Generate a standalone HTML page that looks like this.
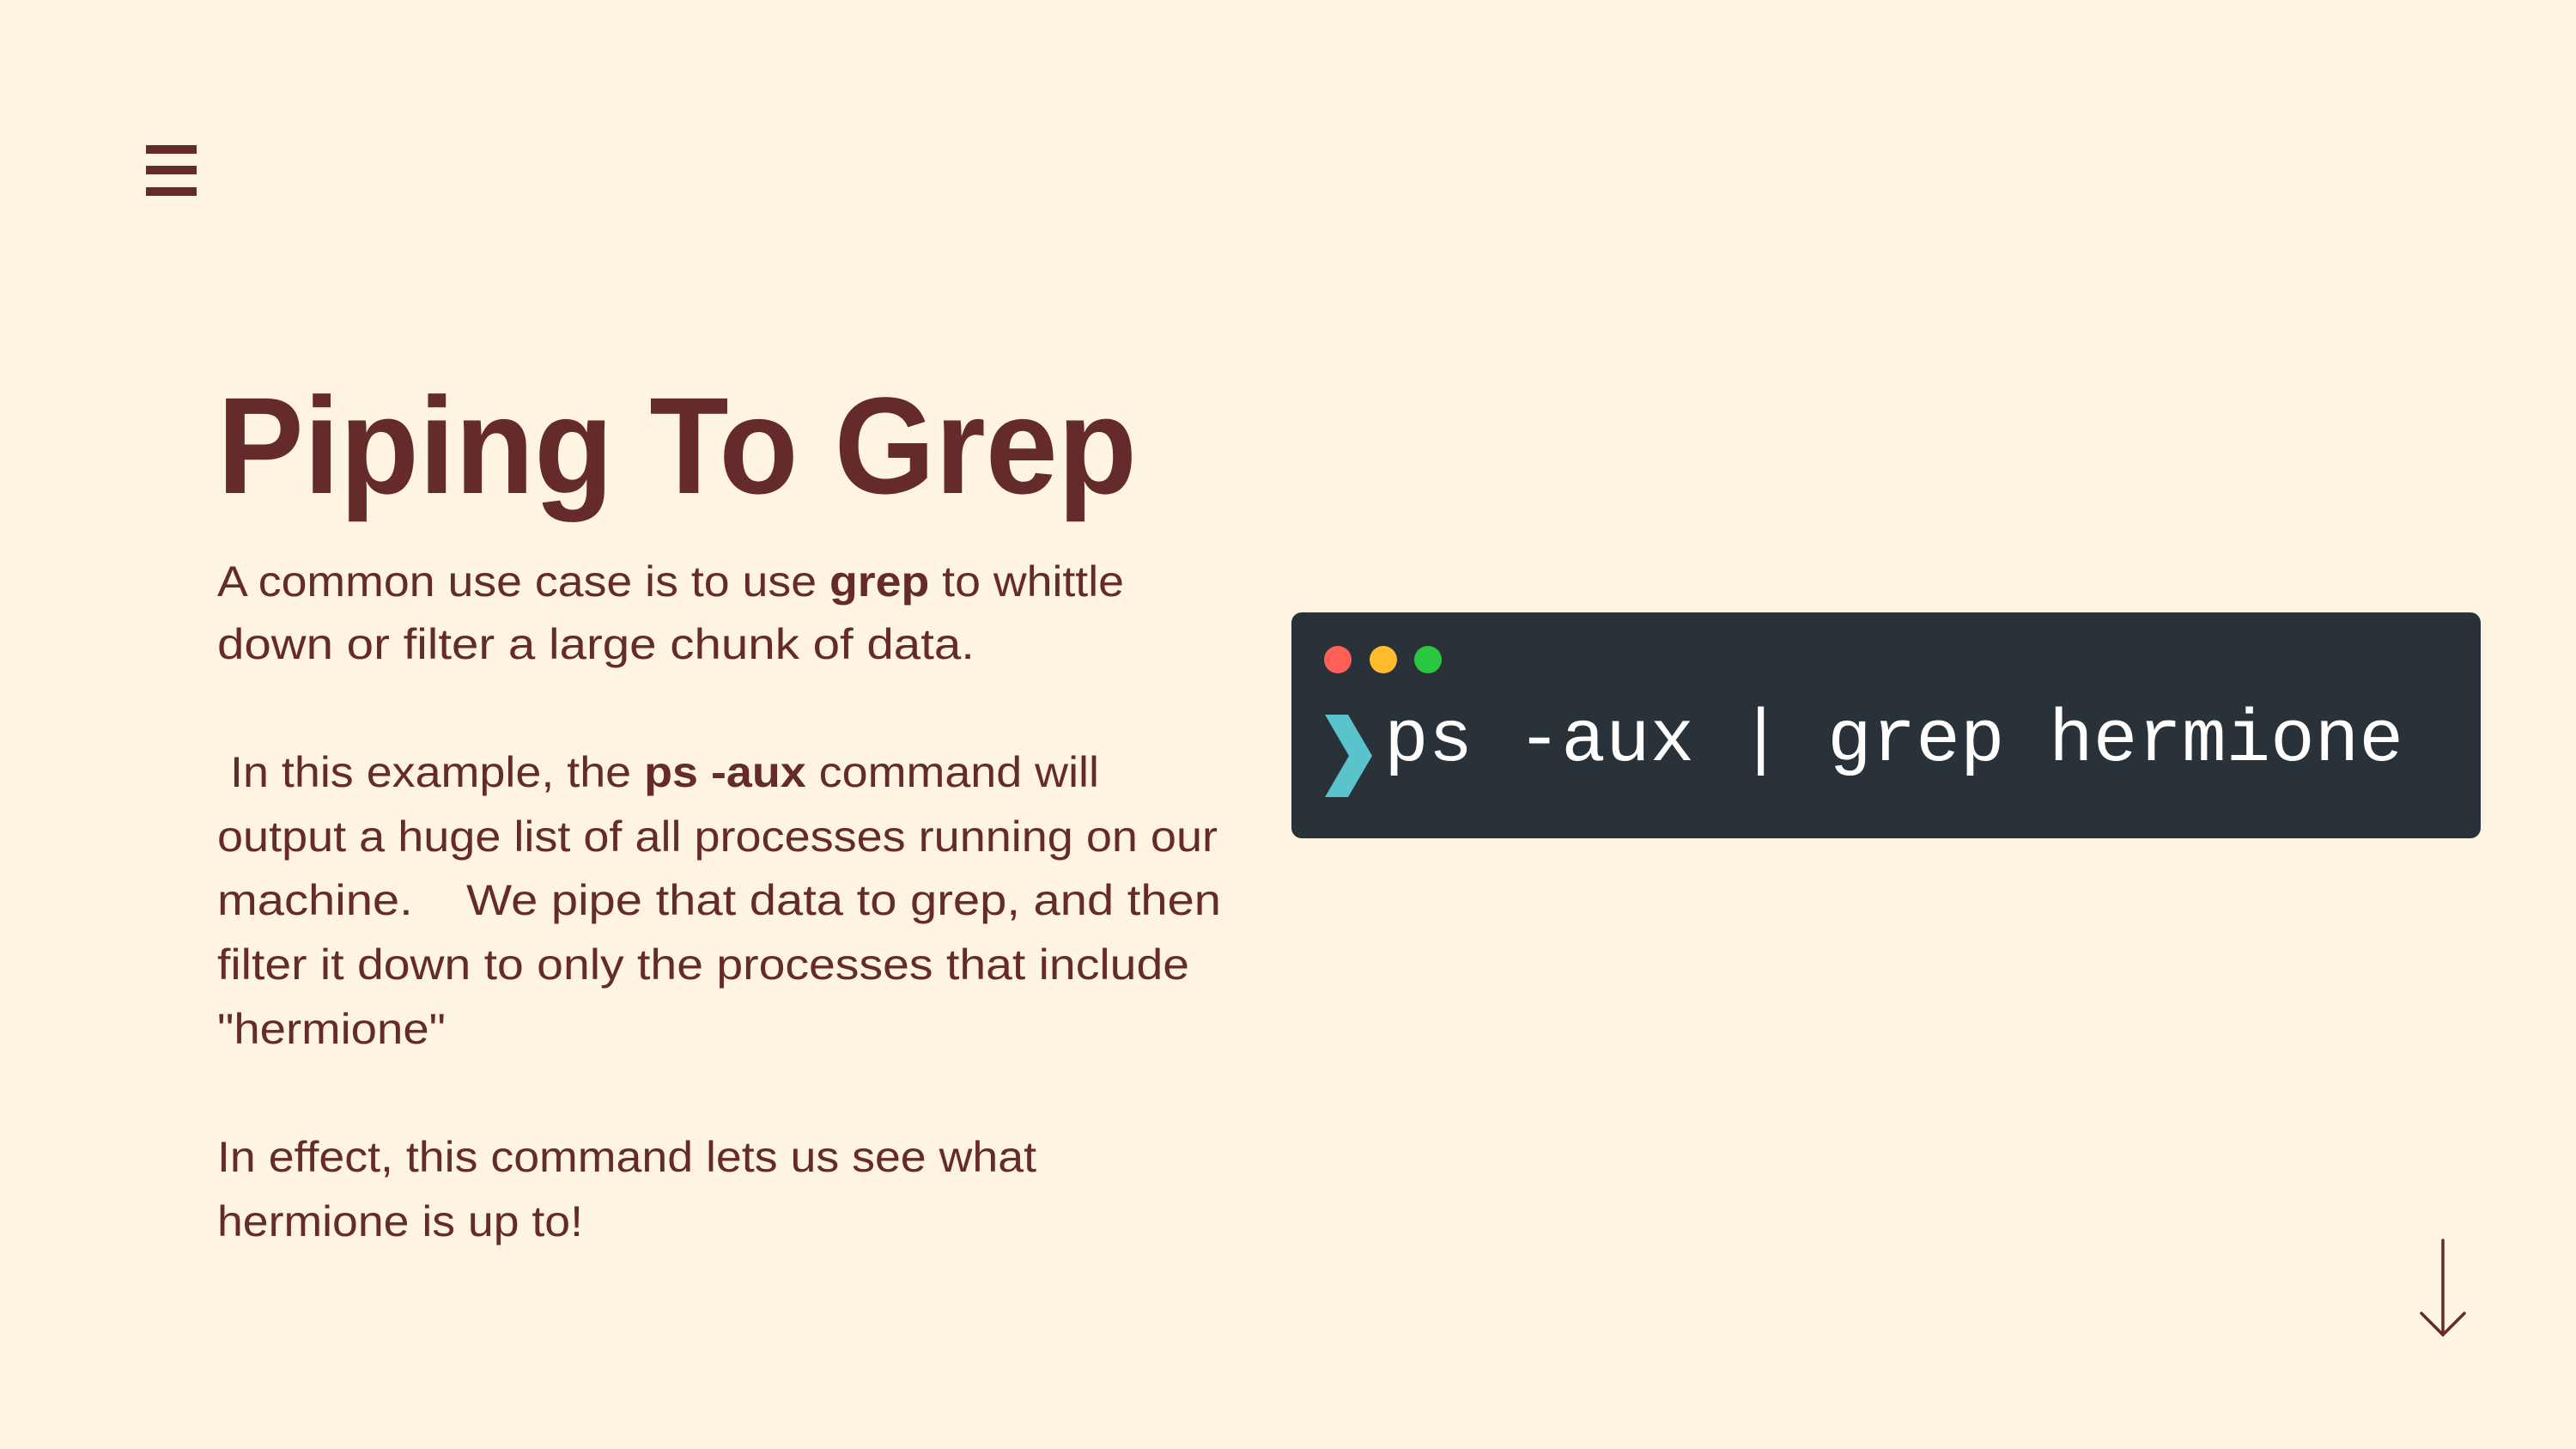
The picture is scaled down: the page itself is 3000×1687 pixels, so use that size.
<!DOCTYPE html>
<html><head><meta charset="utf-8"><style>
html,body{margin:0;padding:0;background:#FFF3E2;width:3000px;height:1687px;overflow:hidden}
svg{display:block}
</style></head><body>
<svg width="3000" height="1687" viewBox="0 0 3000 1687" xmlns="http://www.w3.org/2000/svg">
<rect width="3000" height="1687" fill="#FFF3E2"/>
<g fill="#652A2A">
<rect x="170" y="169" width="59" height="10"/>
<rect x="170" y="193" width="59" height="10"/>
<rect x="170" y="218" width="59" height="10"/>
</g>
<text x="253" y="574" font-family="Liberation Sans, sans-serif" font-weight="bold" font-size="160" fill="#652A2A" textLength="1071" lengthAdjust="spacingAndGlyphs">Piping To Grep</text>
<g font-family="Liberation Sans, sans-serif" font-size="50" fill="#652A2A">
<text x="253" y="694" textLength="1056" lengthAdjust="spacingAndGlyphs">A common use case is to use <tspan font-weight="bold">grep</tspan> to whittle</text>
<text x="253" y="767" textLength="882" lengthAdjust="spacingAndGlyphs">down or filter a large chunk of data.</text>
<text x="268" y="916" textLength="1012" lengthAdjust="spacingAndGlyphs">In this example, the <tspan font-weight="bold">ps -aux</tspan> command will</text>
<text x="253" y="991" textLength="1165" lengthAdjust="spacingAndGlyphs">output a huge list of all processes running on our</text>
<text x="253" y="1065" textLength="1169" lengthAdjust="spacingAndGlyphs" xml:space="preserve">machine.    We pipe that data to grep, and then</text>
<text x="253" y="1140" textLength="1132" lengthAdjust="spacingAndGlyphs">filter it down to only the processes that include</text>
<text x="253" y="1215" textLength="266" lengthAdjust="spacingAndGlyphs">"hermione"</text>
<text x="253" y="1364" textLength="954" lengthAdjust="spacingAndGlyphs">In effect, this command lets us see what</text>
<text x="253" y="1439" textLength="426" lengthAdjust="spacingAndGlyphs">hermione is up to!</text>
</g>
<rect x="1504" y="713" width="1385" height="263" rx="12" fill="#283238"/>
<circle cx="1558" cy="768" r="16" fill="#FE5F57"/>
<circle cx="1611" cy="768" r="16" fill="#FEBB2E"/>
<circle cx="1663" cy="768" r="16" fill="#29C840"/>
<polygon points="1543,832 1570,832 1598,880 1570,928 1543,928 1571,880" fill="#5BC3CB"/>
<text x="1612" y="885" font-family="Liberation Mono, monospace" font-size="86" fill="#FFFFFF" textLength="1187" lengthAdjust="spacingAndGlyphs" xml:space="preserve">ps -aux | grep hermione</text>
<g stroke="#652A2A" stroke-width="3.5" fill="none" stroke-linecap="round">
<line x1="2845" y1="1444" x2="2845" y2="1554"/>
<polyline points="2820,1529 2845,1554 2870,1529"/>
</g>
</svg>
</body></html>
